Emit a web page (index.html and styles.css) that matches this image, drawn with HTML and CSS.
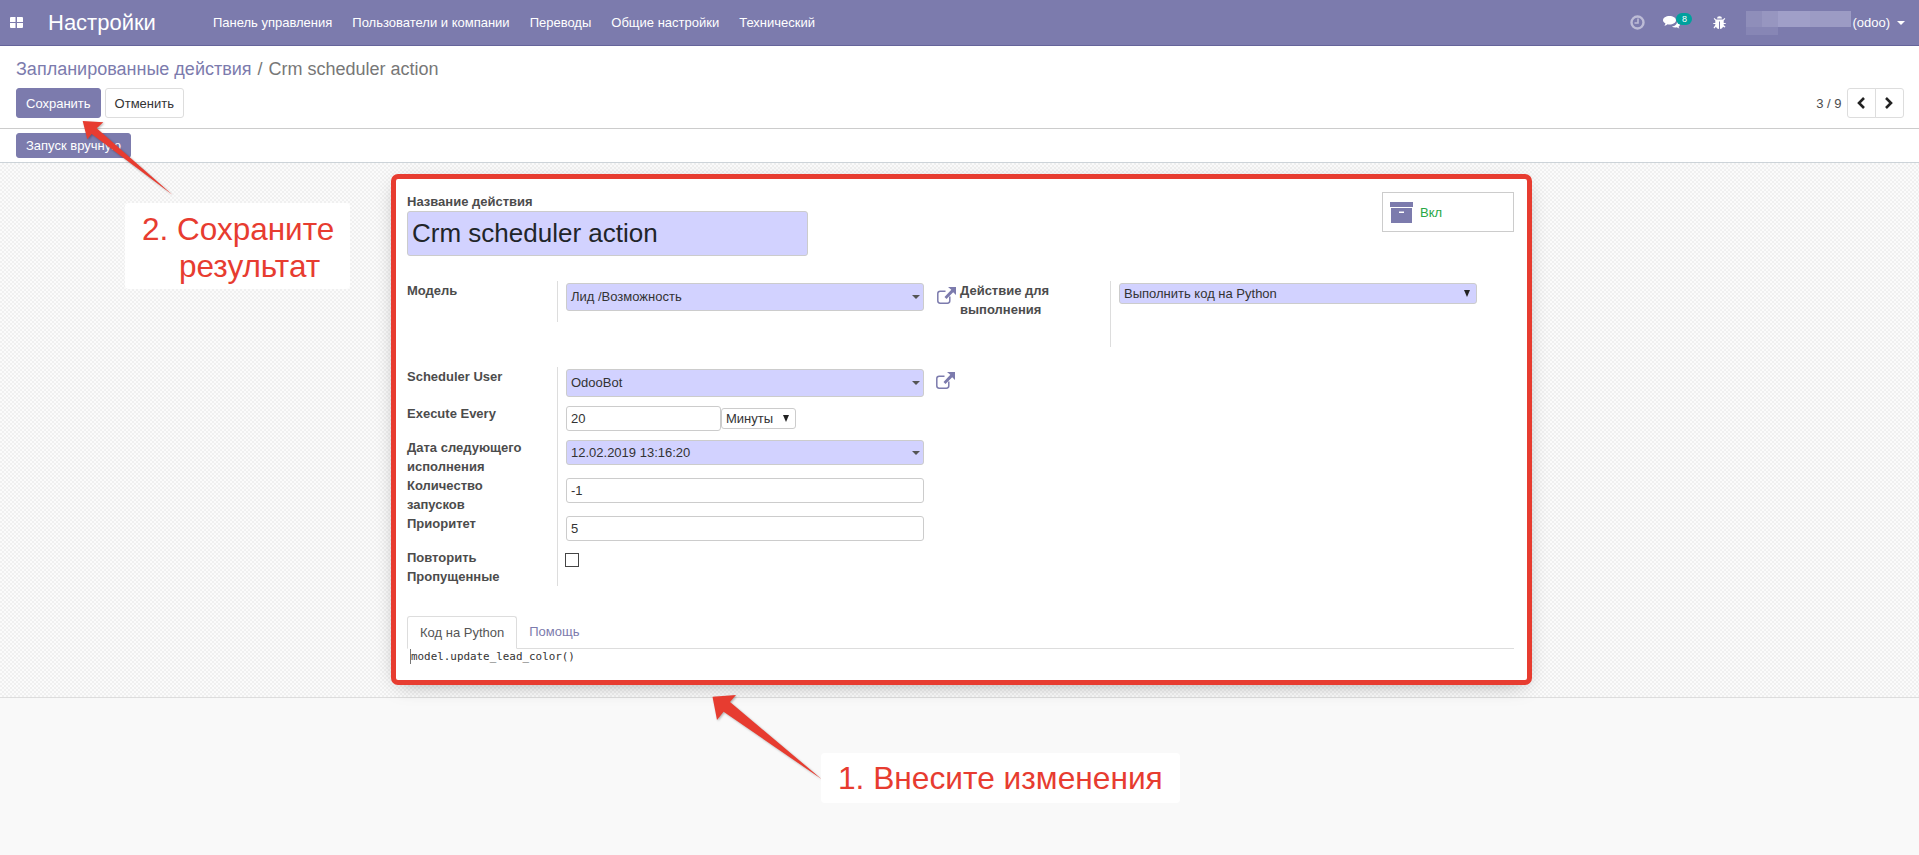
FILE: index.html
```html
<!DOCTYPE html>
<html lang="ru">
<head>
    <meta charset="utf-8">
    <title>Запланированные действия</title>
    <link rel="stylesheet" href="styles.css">
</head>
<body>
<header class="navbar">
    <svg class="apps-icon" width="13" height="11" viewBox="0 0 13 11"><path fill="#fff" d="M0 1q0-1 1-1h4.500v5H0zM7 0h5q1 0 1 1v4H7zM0 6h5.500v5H1q-1 0-1-1zM7 6h6v4q0 1-1 1H7z"/></svg>
    <span class="brand">Настройки</span>
    <nav class="menu">
        <a>Панель управления</a>
        <a>Пользователи и компании</a>
        <a>Переводы</a>
        <a>Общие настройки</a>
        <a>Технический</a>
    </nav>
    <div class="systray">
        <svg class="tray-clock" width="15" height="15" viewBox="0 0 15 15"><circle cx="7.500" cy="7.500" r="6" fill="none" stroke="#bdbcd6" stroke-width="2.400"/><path fill="none" stroke="#bdbcd6" stroke-width="1.600" d="M8 3.500V8H4.500"/></svg>
        <span class="tray-chat">
            <svg width="17" height="13" viewBox="0 0 17 13"><path fill="#fff" d="M6.500 0C10 0 13 1.800 13 4.300S10 8.500 6.500 8.500c-.7 0-1.300-.1-1.900-.2C3.700 9 2.600 9.600 1.300 9.800 2 9 2.400 8.200 2.500 7.500 1 6.700 0 5.600 0 4.300 0 1.800 3 0 6.500 0z"/><path fill="#fff" d="M14 5c1.800.6 3 1.800 3 3.200 0 1-.6 1.900-1.500 2.500.1.600.5 1.300 1 1.800-1-.1-2-.6-2.700-1.200-.5.1-1 .2-1.500.2-1.300 0-2.500-.4-3.400-1C12 10.300 14.500 8 14 5z"/></svg>
            <b class="badge">8</b>
        </span>
        <svg class="tray-bug" width="13" height="13" viewBox="0 0 13 13"><path fill="#fff" d="M4 2.500a2.500 2.300 0 0 1 5 0zM3 3.500h7l1.500-1.500.8.800L10.700 4.500V7h2v1h-2v1l1.800 1.800-.8.800L10 10.700C9.500 12 8 13 7 13V5.500H6V13c-1 0-2.500-1-3-2.300l-1.700 1.900-.8-.8L2.300 9V8h-2V7h2V4.500L.7 2.800l.8-.8z"/></svg>
        <span class="user-blur"></span>
        <span class="user-name">(odoo)</span>
        <span class="user-caret"></span>
    </div>
</header>

<section class="control-panel">
    <div class="breadcrumb"><a>Запланированные действия</a><span class="crumb-sep">/</span><span>Crm scheduler action</span></div>
    <div class="cp-row">
        <div class="cp-buttons">
            <button class="btn btn-primary">Сохранить</button>
            <button class="btn">Отменить</button>
        </div>
        <div class="pager">
            <span class="pager-value">3 / 9</span>
            <div class="pager-buttons">
                <button class="pager-btn"><svg width="10" height="12" viewBox="0 0 10 12"><path fill="none" stroke="#222" stroke-width="2.600" d="M8 1L3 6l5 5"/></svg></button>
                <button class="pager-btn"><svg width="10" height="12" viewBox="0 0 10 12"><path fill="none" stroke="#222" stroke-width="2.600" d="M2 1l5 5-5 5"/></svg></button>
            </div>
        </div>
    </div>
</section>

<div class="statusbar">
    <button class="btn btn-primary btn-small">Запуск вручную</button>
</div>

<main class="sheet-bg">
    <form class="sheet">
        <div class="title-row">
            <div>
                <div class="field-label">Название действия</div>
                <div class="input required name-input">Crm scheduler action</div>
            </div>
            <div class="toggle-box">
                <svg width="23" height="21" viewBox="0 0 23 21"><path fill="#7c7bad" d="M0 0h23v5H0zM1 6h21v15H1z"/><path fill="#fff" d="M9 9.500h5v1.500H9z"/></svg>
                <span>Вкл</span>
            </div>
        </div>

        <div class="group top-group">
            <div class="row row-model">
                <div class="field-label">Модель</div>
                <div class="value">
                    <div class="input required caret wide">Лид /Возможность</div>
                </div>
            </div>
            <svg class="ext-link" width="19" height="17" viewBox="0 0 19 17"><path fill="none" stroke="#7c7bad" stroke-width="1.500" d="M12.800 9.500v4.300q0 2.400-2.400 2.400H3.200q-2.400 0-2.400-2.400V6.600q0-2.400 2.400-2.400h5.300"/><path fill="#7c7bad" d="M11 0h8v8l-2.800-2.800L9.500 12l-2-2 6.800-7.200z"/></svg>
            <div class="row row-action">
                <div class="field-label">Действие для выполнения</div>
                <div class="value">
                    <div class="input required small-select wide">Выполнить код на Python<i></i></div>
                </div>
            </div>
        </div>

        <div class="group">
            <div class="row">
                <div class="field-label">Scheduler User</div>
                <div class="value">
                    <div class="input required caret wide">OdooBot</div>
                </div>
                <svg class="ext-link" width="19" height="17" viewBox="0 0 19 17"><path fill="none" stroke="#7c7bad" stroke-width="1.500" d="M12.800 9.500v4.300q0 2.400-2.400 2.400H3.200q-2.400 0-2.400-2.400V6.600q0-2.400 2.400-2.400h5.300"/><path fill="#7c7bad" d="M11 0h8v8l-2.800-2.800L9.500 12l-2-2 6.800-7.200z"/></svg>
            </div>
            <div class="row">
                <div class="field-label">Execute Every</div>
                <div class="value interval">
                    <div class="input plain interval-number">20</div>
                    <div class="input small-select interval-unit">Минуты<i></i></div>
                </div>
            </div>
            <div class="row">
                <div class="field-label">Дата следующего исполнения</div>
                <div class="value">
                    <div class="input required caret plain wide">12.02.2019 13:16:20</div>
                </div>
            </div>
            <div class="row">
                <div class="field-label">Количество запусков</div>
                <div class="value">
                    <div class="input plain wide">-1</div>
                </div>
            </div>
            <div class="row">
                <div class="field-label">Приоритет</div>
                <div class="value">
                    <div class="input plain wide">5</div>
                </div>
            </div>
            <div class="row">
                <div class="field-label">Повторить Пропущенные</div>
                <div class="value">
                    <span class="checkbox"></span>
                </div>
            </div>
        </div>

        <div class="tabs">
            <a class="tab active">Код на Python</a>
            <a class="tab">Помощь</a>
        </div>
        <div class="code-panel"><span class="code-cursor"></span>model.update_lead_color()</div>
    </form>
</main>

<svg class="arrows" width="1919" height="855" viewBox="0 0 1919 855">
    <path fill="#e73c30" d="M82.700 121L103.300 122.300 96.700 128.300 172.700 195 91.700 134 87.300 139.300z"/>
    <path fill="#e73c30" d="M712.500 696.700L736 695 730 702 821.800 779.300 723.600 711.700 717 720z"/>
</svg>
<div class="note note-save">2. Сохраните<br><span class="note-indent">результат</span></div>
<div class="note note-edit">1. Внесите изменения</div>
</body>
</html>
```

FILE: styles.css
```css
html, body {
    height: 100%;
}

body {
    position: relative;
    margin: 0;
    overflow: hidden;
    background-color: #f9f9f9;
    color: #4c4c4c;
    font-family: "Liberation Sans", Arial, sans-serif;
    font-size: 13px;
}

/* top bar */
.navbar {
    display: flex;
    align-items: center;
    height: 45px;
    border-bottom: 1px solid #65649a;
    background-color: #7c7bad;
    color: #fff;
}

.apps-icon {
    margin: 0 0 0 10px;
}

.brand {
    margin-left: 25px;
    font-size: 22px;
}

.menu {
    display: flex;
    gap: 20px;
    margin-left: 57px;
    font-size: 13px;
}

.systray {
    display: flex;
    align-items: center;
    margin-left: auto;
    padding-right: 14px;
}

.tray-chat {
    position: relative;
    display: flex;
    margin-left: 18px;
}

.badge {
    position: absolute;
    top: -3px;
    left: 13px;
    width: 16px;
    height: 12px;
    border-radius: 6px;
    background-color: #00a09d;
    font-size: 9px;
    font-weight: normal;
    line-height: 12px;
    text-align: center;
}

.tray-bug {
    margin-left: 33px;
}

.user-blur {
    position: relative;
    width: 105px;
    height: 16px;
    margin: -7px 1px 0 20px;
    background: linear-gradient(90deg, #8f8eba 0 16px, #9796c0 16px 32px, #a09fc8 32px 64px, #9c9bc4 64px 105px);
}

.user-blur::after {
    content: "";
    position: absolute;
    top: 16px;
    left: 0;
    width: 32px;
    height: 8px;
    background-color: #8786b5;
}

.user-caret {
    margin-left: 7px;
    border-top: 4px solid #fff;
    border-right: 4px solid transparent;
    border-left: 4px solid transparent;
}

/* control panel */
.control-panel {
    height: 82px;
    padding: 0 15.500px 0 16px;
    border-bottom: 1px solid #ccc;
    background-color: #fff;
}

.breadcrumb {
    display: flex;
    align-items: flex-end;
    height: 35px;
    color: #777;
    font-size: 18px;
    line-height: 23px;
}

.breadcrumb a {
    color: #7c7bad;
}

.crumb-sep {
    margin: 0 6px;
}

.cp-row {
    display: flex;
    justify-content: space-between;
    margin-top: 7px;
}

.cp-buttons {
    display: flex;
    gap: 4px;
}

.btn {
    height: 30px;
    padding: 0 9px;
    border: 1px solid #ddd;
    border-radius: 3px;
    background-color: #fff;
    color: #333;
    font-family: inherit;
    font-size: 13px;
}

.btn-primary {
    border-color: #7c7bad;
    background-color: #7c7bad;
    color: #fff;
}

.btn-small {
    height: 25px;
}

.pager {
    display: flex;
    align-items: center;
    gap: 5px;
}

.pager-buttons {
    display: flex;
}

.pager-btn {
    display: flex;
    align-items: center;
    justify-content: center;
    width: 29px;
    height: 30px;
    padding: 0;
    border: 1px solid #ddd;
    border-radius: 3px 0 0 3px;
    background-color: #fff;
}

.pager-btn + .pager-btn {
    margin-left: -1px;
    border-radius: 0 3px 3px 0;
}

.statusbar {
    height: 34px;
    padding: 4px 16px 0;
    border-bottom: 1px solid #ccd3d8;
    background-color: #fff;
    box-sizing: border-box;
}

/* form */
.sheet-bg {
    padding: 11px 0 12px 391px;
    border-bottom: 1px solid #ddd;
    background-color: #fafafa;
    background-image: conic-gradient(#f0f0f0 25%, #fbfbfb 0 50%, #f0f0f0 0 75%, #fbfbfb 0);
    background-size: 4px 4px;
}

.sheet {
    width: 1141px;
    height: 511px;
    padding: 13px 13px 0 11px;
    border: 5px solid #e73c30;
    border-radius: 7px;
    background-color: #fff;
    box-shadow: 0 5px 20px -8px rgba(0, 0, 0, .4);
    box-sizing: border-box;
}

.title-row {
    display: flex;
    justify-content: space-between;
    align-items: flex-start;
}

.field-label {
    flex: none;
    width: 150px;
    padding-right: 25px;
    color: #4c4c4c;
    font-size: 13px;
    font-weight: bold;
    line-height: 19px;
    box-sizing: border-box;
}

.title-row .field-label {
    width: auto;
    padding-right: 0;
}

.input {
    position: relative;
    height: 25px;
    padding: 0 4px;
    border: 1px solid #ccc;
    border-radius: 3px;
    background-color: #fff;
    color: #333;
    line-height: 23px;
    box-sizing: border-box;
}

.required {
    background-color: #d2d2ff;
}

.name-input {
    width: 401px;
    height: 45px;
    color: #212529;
    font-size: 26px;
    line-height: 43px;
}

.toggle-box {
    display: flex;
    align-items: center;
    gap: 7px;
    width: 132px;
    height: 40px;
    padding-left: 7px;
    border: 1px solid #ccc;
    color: #28a745;
    box-sizing: border-box;
}

.group {
    margin-top: 20px;
}

.top-group {
    display: flex;
    align-items: flex-start;
    margin-top: 25px;
}

.row {
    display: flex;
    align-items: stretch;
}

.value {
    padding: 2px 0 7px 8px;
    border-left: 1px solid #ddd;
}

.row-model .value {
    height: 41px;
    box-sizing: border-box;
}

.row-action {
    margin-left: 4.500px;
}

.row-action .value {
    height: 66px;
    box-sizing: border-box;
}

.wide {
    width: 358px;
}

.caret {
    height: 28px;
    line-height: 26px;
}

.caret.plain {
    height: 25px;
    line-height: 23px;
}

.caret::after {
    content: "";
    position: absolute;
    top: 50%;
    right: 3px;
    margin-top: -2px;
    border-top: 4px solid #555;
    border-right: 4px solid transparent;
    border-left: 4px solid transparent;
}

.small-select {
    height: 21px;
    line-height: 19px;
}

.small-select i {
    position: absolute;
    top: 6px;
    right: 6px;
    border-top: 7px solid #222;
    border-right: 3px solid transparent;
    border-left: 3px solid transparent;
}

.ext-link {
    flex: none;
    margin: 6px 0 0 12px;
}

.top-group > .ext-link {
    margin: 6px 0 0 12.500px;
}

.row .ext-link {
    margin-top: 5px;
}

.interval {
    display: flex;
    align-items: center;
    align-self: flex-start;
}

.interval-number {
    width: 155px;
}

.interval-unit {
    width: 75px;
}

.checkbox {
    display: block;
    width: 14px;
    height: 14px;
    margin: 3px 0 0 -1px;
    border: 1px solid #444;
    box-sizing: border-box;
}

/* tabs */
.tabs {
    display: flex;
    height: 33px;
    margin-top: 30px;
    border-bottom: 1px solid #ddd;
    box-sizing: border-box;
}

.tab {
    height: 33px;
    padding: 0 12px;
    color: #7c7bad;
    line-height: 32px;
    box-sizing: border-box;
}

.tab.active {
    border: 1px solid #ddd;
    border-bottom-color: #fff;
    border-radius: 3px 3px 0 0;
    color: #555;
}

.code-panel {
    position: relative;
    padding: 0 0 0 4px;
    color: #333;
    font-family: "DejaVu Sans Mono", monospace;
    font-size: 10.900px;
    line-height: 15px;
}

.code-cursor {
    position: absolute;
    top: 0;
    left: 3px;
    width: 1px;
    height: 15px;
    background-color: #777;
}

/* annotations over the screenshot */
.arrows {
    position: absolute;
    top: 0;
    left: 0;
    pointer-events: none;
    filter: drop-shadow(1px 1px 1px rgba(0, 0, 0, .3));
}

.note {
    position: absolute;
    border-radius: 4px;
    background-color: #fff;
    color: #e73c30;
    font-size: 31.500px;
    box-sizing: border-box;
}

.note-save {
    top: 203px;
    left: 125px;
    width: 225px;
    height: 86px;
    padding: 8px 0 0 17px;
    line-height: 37px;
}

.note-indent {
    margin-left: 37px;
}

.note-edit {
    top: 753px;
    left: 821px;
    width: 359px;
    height: 50px;
    padding-left: 17px;
    font-size: 31.700px;
    line-height: 50px;
}
```
